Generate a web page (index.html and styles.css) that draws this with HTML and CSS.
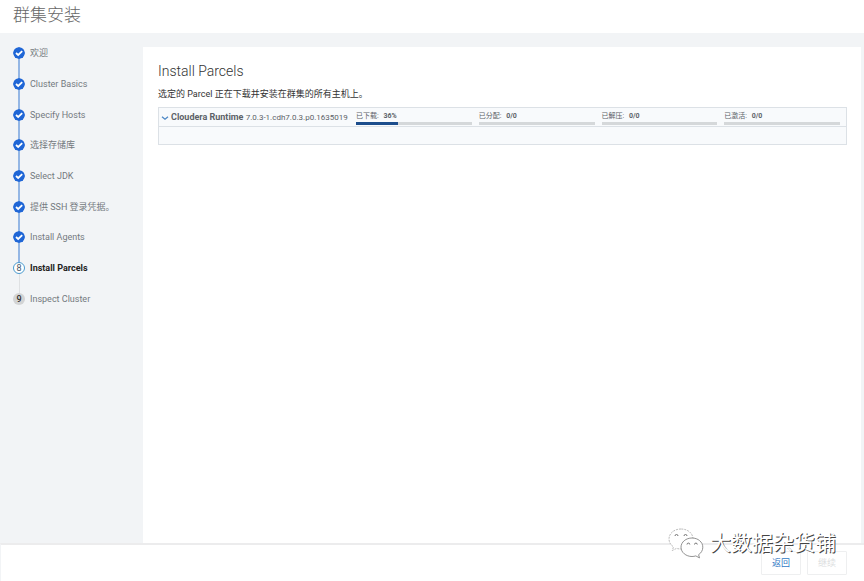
FILE: index.html
```html
<!DOCTYPE html>
<html lang="zh-CN">
<head>
<meta charset="utf-8">
<meta name="viewport" content="width=device-width, initial-scale=1">
<title>群集安装</title>
<link rel="stylesheet" href="styles.css">
</head>
<body>
<svg class="defs" aria-hidden="true">
  <symbol id="check" viewBox="0 0 12 12">
    <circle cx="6" cy="6" r="6" fill="#1f66d6"/>
    <path d="M3 6 5.200 8 9.200 4.200" fill="none" stroke="#fff" stroke-width="1.8"/>
  </symbol>
</svg>
<header class="header"><h1>群集安装</h1></header>
<div class="body">
  <nav class="sidebar">
    <ol class="steps">
      <li class="step done"><svg class="mark"><use href="#check"/></svg><span>欢迎</span></li>
      <li class="step done"><svg class="mark"><use href="#check"/></svg><span>Cluster Basics</span></li>
      <li class="step done"><svg class="mark"><use href="#check"/></svg><span>Specify Hosts</span></li>
      <li class="step done"><svg class="mark"><use href="#check"/></svg><span>选择存储库</span></li>
      <li class="step done"><svg class="mark"><use href="#check"/></svg><span>Select JDK</span></li>
      <li class="step done"><svg class="mark"><use href="#check"/></svg><span>提供 SSH 登录凭据。</span></li>
      <li class="step done"><svg class="mark"><use href="#check"/></svg><span>Install Agents</span></li>
      <li class="step current" aria-current="step"><span class="mark">8</span><span>Install Parcels</span></li>
      <li class="step todo"><span class="mark">9</span><span>Inspect Cluster</span></li>
    </ol>
  </nav>
  <main class="panel">
    <h2>Install Parcels</h2>
    <p class="intro">选定的 Parcel 正在下载并安装在群集的所有主机上。</p>
    <section class="parcel">
      <div class="parcel-row">
        <div class="parcel-name">
          <svg class="chevron" viewBox="0 0 8 8" aria-hidden="true"><path d="M1 2.700 4 5.300 7 2.700" fill="none" stroke="#4a86c5" stroke-width="1.2"/></svg>
          <span><b>Cloudera Runtime</b> <span class="version">7.0.3-1.cdh7.0.3.p0.1635019</span></span>
        </div>
        <div class="stages">
          <div class="stage"><div class="label">已下载: <b>36%</b></div><div class="bar"><div class="fill" style="width:36%"></div></div></div>
          <div class="stage"><div class="label">已分配: <b>0/0</b></div><div class="bar"></div></div>
          <div class="stage"><div class="label">已解压: <b>0/0</b></div><div class="bar"></div></div>
          <div class="stage"><div class="label">已激活: <b>0/0</b></div><div class="bar"></div></div>
        </div>
      </div>
      <div class="parcel-detail"></div>
    </section>
  </main>
</div>
<footer class="footer">
  <button class="btn" type="button">返回</button>
  <button class="btn" type="button" disabled>继续</button>
</footer>
<div class="watermark">
  <svg class="wechat" viewBox="0 0 36 32" aria-hidden="true">
    <g fill="#fff" stroke="#aaa" stroke-width=".8">
      <path stroke-dasharray="2 1" d="M13 2C6 2 1 6.500 1 12c0 3.300 1.700 6 4.500 7.800L4.300 23.500 8.500 21.400c1.500.4 3 .6 4.500.6C20 22 25 17.500 25 12S20 2 13 2Z"/>
      <path stroke="#777" d="M24 11c-6 0-11 4-11 9.200s5 9.300 11 9.300c1.300 0 2.600-.2 3.800-.6l3.700 2-.9-3.200c2.700-1.800 4.200-4.500 4.200-7.500C34.800 15 30 11 24 11Z"/>
    </g>
    <g fill="none" stroke="#666" stroke-width=".9">
      <path d="M7 9a1.500 1.500 0 0 1 3 0M16 9a1.500 1.500 0 0 1 3 0M19 17.500a1.400 1.400 0 0 1 2.800 0M26.500 17.500a1.400 1.400 0 0 1 2.800 0"/>
    </g>
  </svg>
  <span>大数据杂货铺</span>
</div>
</body>
</html>
```
FILE: styles.css
```css
* { box-sizing: border-box; }
body {
  margin: 0;
  min-height: 100vh;
  display: flex;
  flex-direction: column;
  position: relative;
  background: #f2f4f6;
  color: #5c6268;
  font: 9px/12px Roboto, "Noto Sans CJK SC", sans-serif;
}
h1, h2, p, ol { margin: 0; padding: 0; }
.defs { position: absolute; width: 0; height: 0; }
.header { background: #fff; padding: 3px 13px 6px; }
h1 { font-size: 17px; line-height: 24px; font-weight: 300; color: #666; }
.body { flex: 1; display: flex; }
.sidebar { flex: 0 0 143px; padding: 5px 13px; }
.steps {
  list-style: none;
  display: grid;
  grid-auto-rows: 1fr;
  height: 276px;
}
.step {
  position: relative;
  display: flex;
  align-items: center;
  gap: 5px;
  color: #747a80;
  white-space: nowrap;
}
.step:not(:last-child)::after {
  content: "";
  position: absolute;
  left: 5px;
  top: 50%;
  width: 2px;
  height: 100%;
  background: #94b6e4;
}
.step.current::after { background: #dfe1e3; width: 1px; left: 6px; }
.mark {
  position: relative;
  z-index: 1;
  width: 12px;
  height: 12px;
  border-radius: 50%;
  line-height: 12px;
  text-align: center;
  font-size: 9px;
}
.current { color: #222; font-weight: 700; }
.current .mark {
  border: 1px solid #4a9bd0;
  background: #fff;
  color: #456;
  line-height: 10px;
  font-weight: 400;
}
.todo .mark { background: #d3d4d5; color: #333; font-weight: 500; }
.panel {
  flex: 1;
  margin: 14px 3px 0 0;
  padding: 14px 14px 14px 15px;
  background: #fff;
}
h2 { font-size: 14px; line-height: 20px; font-weight: 300; color: #333; }
.intro { margin: 7px 0; color: #333; }
.parcel { border: 1px solid #dce1e6; background: #f8fafc; }
.parcel-row {
  display: flex;
  gap: 6px;
  padding: 2px 6px 1px 2px;
  border-bottom: 1px solid #dce1e6;
}
.parcel-name {
  flex: 0 0 189px;
  display: flex;
  align-items: center;
  align-self: flex-start;
  gap: 2px;
  line-height: 14px;
  white-space: nowrap;
}
.version { font-size: 8px; }
.chevron { width: 8px; height: 8px; }
.stages { flex: 1; display: grid; grid-template-columns: repeat(4, 1fr); gap: 7px; }
.label { font-size: 7px; line-height: 12px; }
.label b { margin-left: 3px; }
.bar { height: 3px; background: #d5d8da; }
.fill { height: 3px; background: #1c4d8c; }
.parcel-detail { height: 17px; }
.footer {
  display: flex;
  justify-content: flex-end;
  gap: 6px;
  padding: 6px 17px 6px;
  background: #fff;
  border-top: 2px solid #ececed;
  border-left: 1px solid #f2f4f6;
}
.btn {
  width: 40px;
  height: 24px;
  padding: 0;
  border: 1px solid #eeeff0;
  border-radius: 1px;
  background: #fff;
  color: #2f78c4;
  font: inherit;
}
.btn:disabled { color: #dcdee0; }
.watermark {
  position: absolute;
  right: 28px;
  bottom: 22px;
  display: flex;
  align-items: center;
  gap: 6px;
  color: #fff;
  font-size: 21px;
  line-height: 32px;
  text-shadow: 1px 1px 0 #444;
  pointer-events: none;
}
.wechat { width: 36px; height: 32px; }
```
